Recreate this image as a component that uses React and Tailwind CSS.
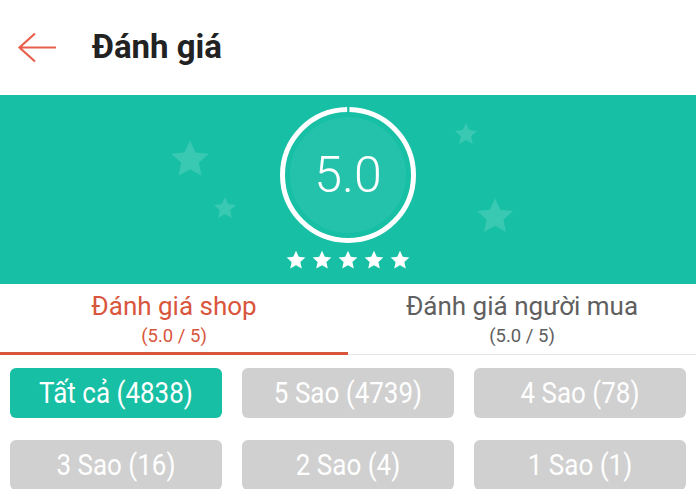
function Star({ size, className }) {
  return (
    <svg width={size} height={size} viewBox="0 0 24 24" className={className}>
      <path
        fill="currentColor"
        d="M12 1.8l3 6.6 7.2.8-5.4 4.9 1.5 7.1L12 17.6l-6.3 3.6 1.5-7.1L1.8 9.2 9 8.4z"
      />
    </svg>
  )
}

const filters = [
  { label: 'Tất cả (4838)', active: true },
  { label: '5 Sao (4739)' },
  { label: '4 Sao (78)' },
  { label: '3 Sao (16)' },
  { label: '2 Sao (4)' },
  { label: '1 Sao (1)' },
]

export default function App() {
  return (
    <div className="w-[696px] h-[489px] overflow-hidden bg-white font-['Roboto',_'Liberation_Sans',_sans-serif]">
      <header className="h-[95px] flex items-center pl-[17px]">
        <svg width="40" height="32" viewBox="0 0 40 32" className="text-[#e8604c]">
          <path
            d="M39 15.5H2.5M18 1.5L2.5 15.5 18 29.5"
            fill="none"
            stroke="currentColor"
            strokeWidth="2.2"
          />
        </svg>
        <h1 className="ml-[35px] text-[33px] font-bold text-[#222] -mt-[1px]">Đánh giá</h1>
      </header>

      <section className="relative h-[189px] bg-[#17bfa5] flex flex-col items-center">
        <Star size={44} className="absolute left-[168px] top-[42px] text-white/15" />
        <Star size={26} className="absolute left-[212px] top-[100px] text-white/15" />
        <Star size={26} className="absolute left-[453px] top-[26px] text-white/15" />
        <Star size={42} className="absolute left-[474px] top-[100px] text-white/15" />

        <div className="relative mt-[12px] w-[136px] h-[136px] flex items-center justify-center">
          <svg width="136" height="136" viewBox="0 0 136 136" className="absolute inset-0">
            <circle cx="68" cy="68" r="58" fill="#ffffff" fillOpacity="0.06" />
            <circle
              cx="68"
              cy="68"
              r="65.5"
              fill="none"
              stroke="#fff"
              strokeWidth="5"
              strokeDasharray="408.5 3"
              strokeDashoffset="-1.5"
              transform="rotate(-90 68 68)"
            />
          </svg>
          <span className="relative text-[50px] text-white font-light leading-none">5.0</span>
        </div>

        <div className="mt-[6px] flex gap-[4px]">
          {[0, 1, 2, 3, 4].map((i) => (
            <Star key={i} size={22} className="text-white" />
          ))}
        </div>
      </section>

      <nav className="flex h-[71px] border-b border-[#e5e5e5]">
        <div className="w-1/2 flex flex-col items-center pt-[7px] border-b-[3px] border-[#d9563d] -mb-px">
          <span className="text-[26px] leading-[30px] text-[#d9563d]">Đánh giá shop</span>
          <span className="text-[18.5px] leading-[24px] mt-[3px] text-[#d9563d]">(5.0 / 5)</span>
        </div>
        <div className="w-1/2 flex flex-col items-center pt-[7px]">
          <span className="text-[26px] leading-[30px] text-[#606060]">Đánh giá người mua</span>
          <span className="text-[18.5px] leading-[24px] mt-[3px] text-[#606060]">(5.0 / 5)</span>
        </div>
      </nav>

      <div className="grid grid-cols-3 gap-x-[20px] gap-y-[22px] px-[10px] pt-[13px]">
        {filters.map((f) => (
          <button
            key={f.label}
            className={
              'h-[50px] rounded-[6px] text-white flex items-center justify-center ' +
              (f.active ? 'bg-[#17bfa5]' : 'bg-[#d0d0d0]')
            }
          >
            <span className="inline-block text-[26px] leading-none scale-y-[1.16]">{f.label}</span>
          </button>
        ))}
      </div>
    </div>
  )
}
